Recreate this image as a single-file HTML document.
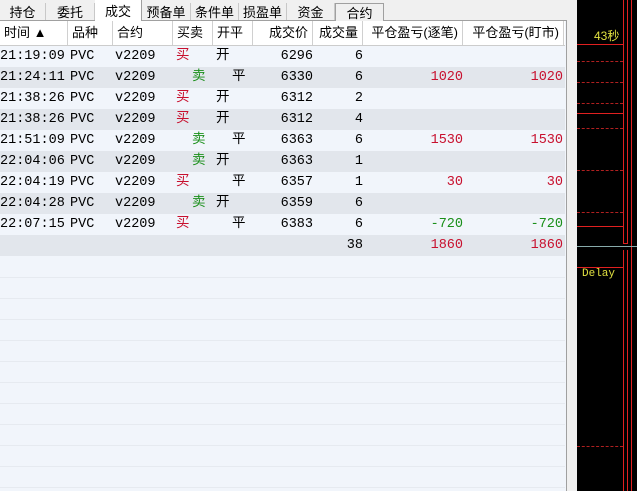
<!DOCTYPE html><html><head><style>
body{margin:0;width:637px;height:491px;overflow:hidden;background:#f0f0f0;font-family:"Liberation Sans","Noto Sans CJK SC",sans-serif;font-size:13px;position:relative}
.tabs{position:absolute;left:0;top:0;height:20px;width:567px;border-bottom:1px solid #a0a0a0}
.tab{position:absolute;top:3px;height:17px;line-height:19px;text-align:center;border-right:1px solid #c8c8c8;font-size:13px;color:#000}
.tab.on{background:#fff;top:0;height:21px;line-height:24px;border-right:1px solid #a0a0a0}
.grid{position:absolute;left:0;top:21px;width:566px;height:470px;background:#f1f5fb;border-right:1px solid #a0a0a0}
.row{position:absolute;left:0;width:565px;height:21px;line-height:21px;font-family:"Liberation Mono","Noto Sans CJK SC",monospace;font-size:13.5px}
.c{position:absolute;top:0;height:21px;white-space:nowrap}
.hd{background:#fff;font-family:"Liberation Sans","Noto Sans CJK SC",sans-serif;font-size:13px;height:24px;line-height:24px;border-bottom:1px solid #ccc}
.hd .c{border-right:1px solid #d0d0d0;height:24px;box-sizing:border-box;padding:0 4px}
.r{text-align:right}
.red{color:#c8102e}.grn{color:#1a8f1a}
.alt{background:#e2e6ec}
.black{position:absolute;left:577px;top:0;width:60px;height:491px;background:#000}
.l{position:absolute;background:#e02020}
.d{position:absolute;height:1px;border-top:1px dashed #b02020}
</style></head><body>
<div class="tabs">
<div class="tab" style="left:0;width:45px">持仓</div>
<div class="tab" style="left:46px;width:48px">委托</div>
<div class="tab on" style="left:95px;width:46px">成交</div>
<div class="tab" style="left:142px;width:48px">预备单</div>
<div class="tab" style="left:191px;width:47px">条件单</div>
<div class="tab" style="left:239px;width:47px">损盈单</div>
<div class="tab" style="left:287px;width:47px">资金</div>
<div class="tab" style="left:335px;width:47px;background:#f0f0f0;border:1px solid #a0a0a0;border-bottom:none">合约</div>
</div>
<div class="grid">
<div class="row hd" style="top:0">
<div class="c" style="left:0;width:68px">时间 ▲</div>
<div class="c" style="left:68px;width:45px">品种</div>
<div class="c" style="left:113px;width:60px">合约</div>
<div class="c" style="left:173px;width:40px">买卖</div>
<div class="c" style="left:213px;width:40px">开平</div>
<div class="c r" style="left:253px;width:60px">成交价</div>
<div class="c r" style="left:313px;width:50px">成交量</div>
<div class="c r" style="left:363px;width:100px">平仓盈亏(逐笔)</div>
<div class="c r" style="left:463px;width:101px">平仓盈亏(盯市)</div>
</div>
</div>
<div id="rows"></div>
<div class="black">
<div style="position:absolute;left:17px;top:27px;color:#e0e040;font-size:12px">43秒</div>
<div style="position:absolute;left:5px;top:268px;color:#e0e040;font-size:11px;font-family:'Liberation Mono',monospace">Delay</div>
<div class="l" style="left:0;top:44px;width:46px;height:1px"></div>
<div class="l" style="left:0;top:113px;width:46px;height:1px"></div>
<div class="l" style="left:0;top:226px;width:46px;height:1px"></div>
<div class="l" style="left:0;top:267px;width:46px;height:1px"></div>
<div class="d" style="left:0;top:61px;width:46px"></div>
<div class="d" style="left:0;top:82px;width:46px"></div>
<div class="d" style="left:0;top:103px;width:46px"></div>
<div class="d" style="left:0;top:128px;width:46px"></div>
<div class="d" style="left:0;top:170px;width:46px"></div>
<div class="d" style="left:0;top:212px;width:46px"></div>
<div class="d" style="left:0;top:446px;width:46px"></div>
<div class="l" style="left:46px;top:0;width:1px;height:243px"></div>
<div class="l" style="left:50px;top:0;width:1px;height:243px"></div>
<div class="l" style="left:46px;top:243px;width:5px;height:1px"></div>
<div class="l" style="left:54px;top:0;width:1px;height:491px"></div>
<div class="l" style="left:46px;top:250px;width:1px;height:241px"></div>
<div class="l" style="left:50px;top:250px;width:1px;height:241px"></div>
<div style="position:absolute;left:0;top:246px;width:60px;height:1px;background:#8aa"></div>
</div>
<script>
var d=[["21:19:09","买","开","6296","6","",""],["21:24:11","卖","平","6330","6","1020","1020"],["21:38:26","买","开","6312","2","",""],["21:38:26","买","开","6312","4","",""],["21:51:09","卖","平","6363","6","1530","1530"],["22:04:06","卖","开","6363","1","",""],["22:04:19","买","平","6357","1","30","30"],["22:04:28","卖","开","6359","6","",""],["22:07:15","买","平","6383","6","-720","-720"]];
var h="";
d.forEach(function(r,i){var t=46+i*21;var b=r[1]=="买";var pc=r[5].charAt(0)=="-"?"grn":"red";
h+='<div class="row'+(i%2?' alt':'')+'" style="top:'+t+'px"><div class="c" style="left:0">'+r[0]+'</div><div class="c" style="left:70px">PVC</div><div class="c" style="left:115px">v2209</div><div class="c '+(b?'red':'grn')+'" style="left:'+(b?176:192)+'px">'+r[1]+'</div><div class="c" style="left:'+(r[2]=="开"?216:232)+'px">'+r[2]+'</div><div class="c r" style="left:253px;width:60px">'+r[3]+'</div><div class="c r" style="left:313px;width:50px">'+r[4]+'</div><div class="c r '+pc+'" style="left:363px;width:100px">'+r[5]+'</div><div class="c r '+pc+'" style="left:463px;width:100px">'+r[6]+'</div></div>';});
h+='<div class="row alt" style="top:235px"><div class="c r" style="left:313px;width:50px">38</div><div class="c r red" style="left:363px;width:100px">1860</div><div class="c r red" style="left:463px;width:100px">1860</div></div>';
for(var y=277;y<491;y+=21)h+='<div style="position:absolute;left:0;top:'+y+'px;width:565px;height:1px;background:#e6eaf0"></div>';
document.getElementById("rows").innerHTML=h;
</script>
</body></html>
